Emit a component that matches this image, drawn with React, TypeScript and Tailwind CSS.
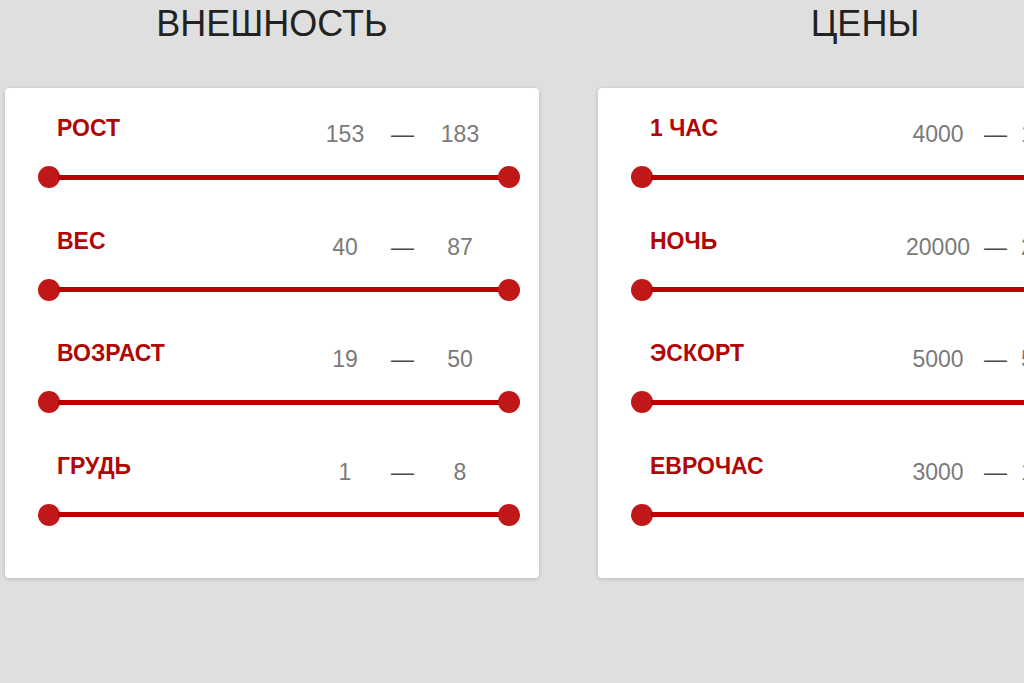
const looks = [
  { label: "РОСТ", from: "153", to: "183" },
  { label: "ВЕС", from: "40", to: "87" },
  { label: "ВОЗРАСТ", from: "19", to: "50" },
  { label: "ГРУДЬ", from: "1", to: "8" },
];

const prices = [
  { label: "1 ЧАС", from: "4000", to: "10000" },
  { label: "НОЧЬ", from: "20000", to: "25000" },
  { label: "ЭСКОРТ", from: "5000", to: "50000" },
  { label: "ЕВРОЧАС", from: "3000", to: "10000" },
];

type Row = { label: string; from: string; to: string };

function RangeRow({ row }: { row: Row }) {
  return (
    <div className="flex flex-col">
      <div className="flex items-start h-[28px] pl-[52px] pr-[49px]">
        <span className="flex-1 pt-[1px] text-[23px] leading-[28px] font-bold text-[#b00606]">{row.label}</span>
        <div className="flex pt-[7px] text-[23px] leading-[28px] text-[#7a7a7a]">
          <span className="w-[60px] flex justify-center whitespace-nowrap">{row.from}</span>
          <span className="w-[55px] flex justify-center text-[#4a4a4a]">—</span>
          <span className="w-[60px] flex justify-center whitespace-nowrap">{row.to}</span>
        </div>
      </div>
      <div className="flex items-center h-[22px] mt-[25px] ml-[33px] mr-[19px]">
        <div className="w-[22px] h-[22px] rounded-full bg-[#c01818] shrink-0" />
        <div className="flex-1 h-[5px] -mx-[2px] bg-[#b80000]" />
        <div className="w-[22px] h-[22px] rounded-full bg-[#c01818] shrink-0" />
      </div>
    </div>
  );
}

function Column({ title, rows }: { title: string; rows: Row[] }) {
  return (
    <div className="w-[534px] shrink-0 flex flex-col">
      <h2 className="pt-[3px] text-center text-[36px] leading-[41px] text-[#222]">{title}</h2>
      <div className="mt-[44px] bg-white rounded-[4px] shadow-[0_1px_4px_rgba(0,0,0,0.18)] pt-[25px] pb-[52px] flex flex-col gap-[37.6px]">
        {rows.map((r) => (
          <RangeRow key={r.label} row={r} />
        ))}
      </div>
    </div>
  );
}

export default function App() {
  return (
    <div
      className="w-[1024px] h-[683px] overflow-hidden bg-[#dfdfdf] pl-[5px] flex gap-[59px]"
      style={{ fontFamily: '"Liberation Sans", Arial, sans-serif' }}
    >
      <Column title="ВНЕШНОСТЬ" rows={looks} />
      <Column title="ЦЕНЫ" rows={prices} />
    </div>
  );
}
